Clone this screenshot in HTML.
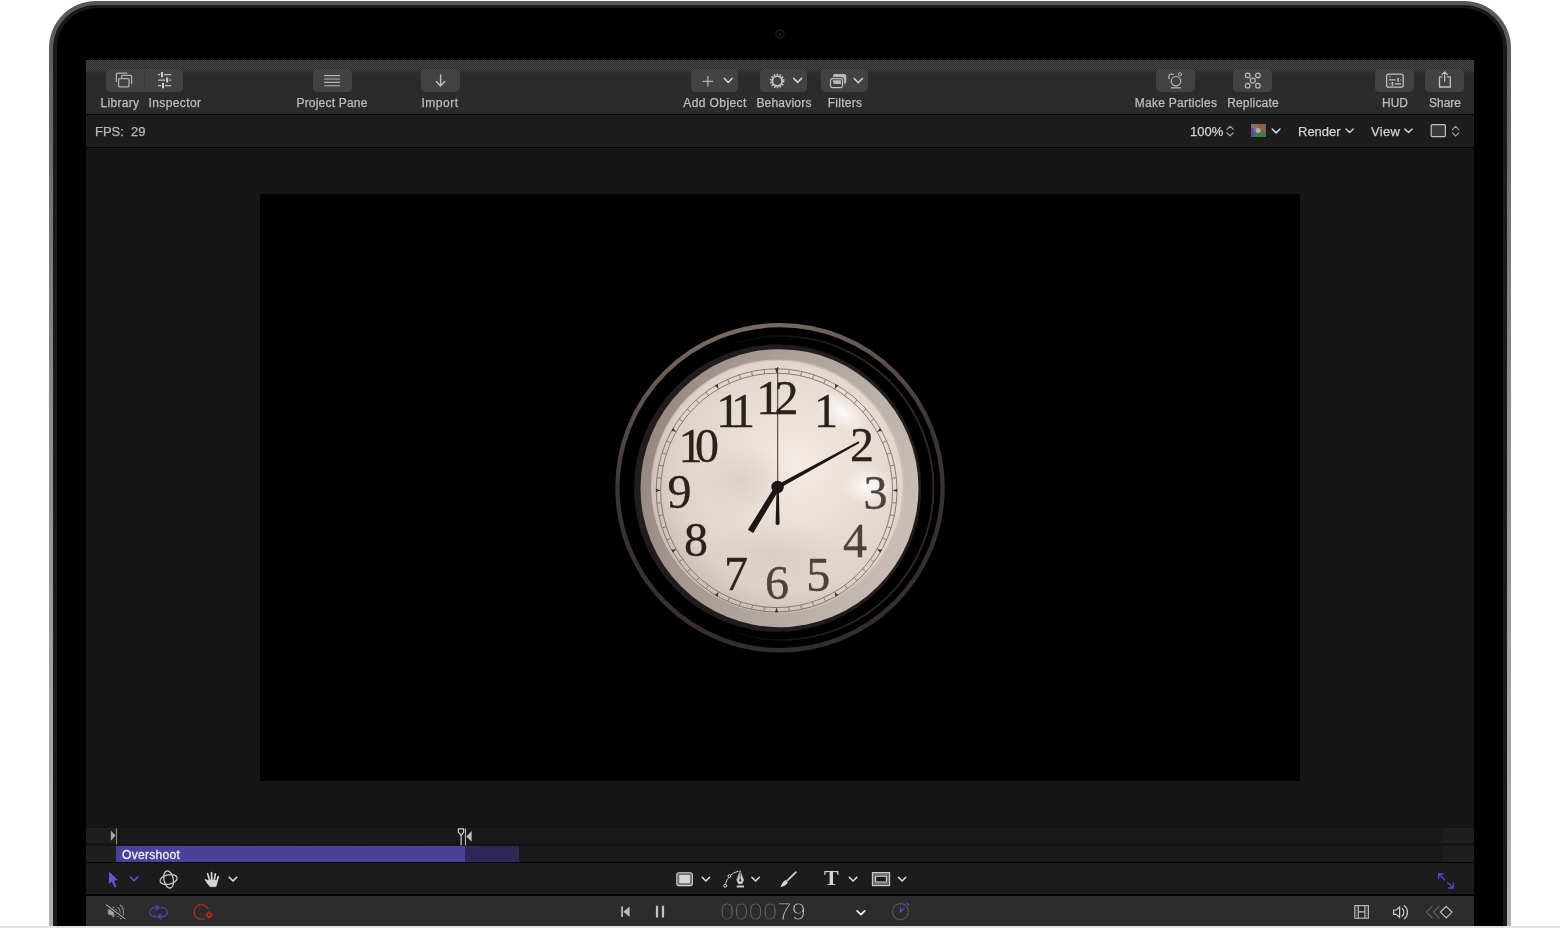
<!DOCTYPE html>
<html lang="en">
<head>
<meta charset="utf-8">
<title>Motion</title>
<style>
*{box-sizing:border-box;margin:0;padding:0}
html,body{width:1560px;height:928px;overflow:hidden;background:#fff}
body{position:relative;font-family:"Liberation Sans",sans-serif;-webkit-font-smoothing:antialiased}
.abs{position:absolute}
#bezelOuter{left:49px;top:1px;width:1462px;height:1000px;border-radius:47px;background:linear-gradient(180deg,#54585b 0px,#5e6265 60px,#8a8e92 400px,#b0b0b0 900px)}
#bezelMid{left:53px;top:5px;width:1454px;height:1000px;border-radius:43px;background:#191919}
#bezelIn{left:57px;top:8px;width:1446px;height:1000px;border-radius:40px;background:#000}
#screen{left:86px;top:60px;width:1388px;height:866px;background:#161616;overflow:hidden}
#bottomStrip{left:0;top:926px;width:1560px;height:2px;background:#e4e1de}
/* coordinates inside #screen are page coords minus (86,60) */
#toolbar{left:0;top:0;width:1388px;height:54px;background:#2b2b2b}
#dither{left:0;top:0;width:1388px;height:10px;background:repeating-conic-gradient(#4a4541 0% 25%,#2d2c2b 0% 50%) 0 0/2px 2px}
#dither2{left:0;top:10px;width:1388px;height:2px;opacity:.6;background:repeating-conic-gradient(#4a4541 0% 25%,#2b2b2b 0% 50%) 0 0/2px 2px}
#dither3{left:0;top:12px;width:1388px;height:2px;opacity:.25;background:repeating-conic-gradient(#4a4541 0% 25%,#2b2b2b 0% 50%) 0 0/2px 2px}
#tline{left:0;top:54px;width:1388px;height:1px;background:#000}
#status{left:0;top:55px;width:1388px;height:32px;background:#1d1d1d}
#sline{left:0;top:87px;width:1388px;height:1px;background:#000}
#canvas{left:174px;top:134px;width:1040px;height:586.5px;background:#000}
#mini1{left:0;top:768px;width:1388px;height:15px;background:#191919}
#mini2{left:0;top:786px;width:1388px;height:16px;background:#191919}
#miniL1{left:0;top:768px;width:30px;height:15px;background:#1f1f1f}
#miniL2{left:0;top:786px;width:30px;height:16px;background:#1f1f1f}
#miniR1{left:1357px;top:768px;width:31px;height:15px;background:#1f1f1f}
#miniR2{left:1357px;top:786px;width:31px;height:16px;background:#1f1f1f}
#ov1{left:30px;top:786px;width:349px;height:16px;background:#4b4198}
#ov2{left:379px;top:786px;width:54px;height:16px;background:#2f2856}
#ovt{-webkit-text-stroke:0.3px #f0eeee;left:36px;top:787.5px;font-size:12px;line-height:14px;color:#f0eeee;letter-spacing:0.3px;white-space:nowrap}
#l3{left:0;top:802px;width:1388px;height:1px;background:#000}
#tools{left:0;top:803px;width:1388px;height:31px;background:#1c1c1c}
#l4{left:0;top:834px;width:1388px;height:2px;background:#000}
#transport{left:0;top:836px;width:1388px;height:30px;background:#2c2c2c}
.btn{position:absolute;top:9px;height:23px;background:#424242;border-radius:4.5px}
.lbl,.st,#ovt,#tc,#ttool{will-change:transform}
.lbl{-webkit-text-stroke:0.25px #c2bebc;position:absolute;top:35.5px;font-size:12px;line-height:14px;color:#c2bebc;white-space:nowrap;text-align:center;transform:translateX(-50%)}
.st{-webkit-text-stroke:0.25px #d6d2d0;position:absolute;top:64px;font-size:13px;line-height:16px;color:#d6d2d0;white-space:pre}
#tc{left:634px;top:837.5px;font-size:24.5px;line-height:28px;letter-spacing:0;transform:scaleX(1.05);transform-origin:0 0;color:#6a6562;white-space:nowrap;-webkit-text-stroke:1.1px #2c2c2c}
#tc b{font-weight:normal;color:#c4bfbc}
#ttool{left:738px;top:806px;font-family:"Liberation Serif",serif;font-weight:bold;font-size:22px;line-height:24px;color:#d6d3d1}
svg#ico{left:0;top:0;width:1560px;height:928px;pointer-events:none}
</style>
</head>
<body>
<div class="abs" id="bezelOuter"></div>
<div class="abs" id="bezelMid"></div>
<div class="abs" id="bezelIn"></div>
<div class="abs" id="screen">
  <div class="abs" id="toolbar"></div>
  <div class="abs" id="dither"></div>
  <div class="abs" id="dither2"></div>
  <div class="abs" id="dither3"></div>
  <div class="btn" style="left:20px;width:77px"></div>
  <div class="btn" style="left:227px;width:39px"></div>
  <div class="btn" style="left:335px;width:39px"></div>
  <div class="btn" style="left:605px;width:47px"></div>
  <div class="btn" style="left:674px;width:47px"></div>
  <div class="btn" style="left:735px;width:47px"></div>
  <div class="btn" style="left:1070px;width:39px"></div>
  <div class="btn" style="left:1147px;width:39px"></div>
  <div class="btn" style="left:1289px;width:39px"></div>
  <div class="btn" style="left:1339px;width:39px"></div>
  <div class="lbl" style="left:33.5px;letter-spacing:0.3px">Library</div>
  <div class="lbl" style="left:89.2px;letter-spacing:0.4px">Inspector</div>
  <div class="lbl" style="left:245.5px;letter-spacing:0.2px">Project Pane</div>
  <div class="lbl" style="left:354.3px;letter-spacing:0.5px">Import</div>
  <div class="lbl" style="left:628.8px;letter-spacing:0.4px">Add Object</div>
  <div class="lbl" style="left:697.5px;letter-spacing:0.2px">Behaviors</div>
  <div class="lbl" style="left:758.5px;letter-spacing:0.25px">Filters</div>
  <div class="lbl" style="left:1089.6px;letter-spacing:0.27px">Make Particles</div>
  <div class="lbl" style="left:1166.5px;letter-spacing:0.18px">Replicate</div>
  <div class="lbl" style="left:1308.5px">HUD</div>
  <div class="lbl" style="left:1358.7px">Share</div>
  <div class="abs" id="tline"></div>
  <div class="abs" id="status"></div>
  <div class="st" style="left:9px;color:#bab6b4;-webkit-text-stroke-color:#bab6b4">FPS:  29</div>
  <div class="st" style="left:1104px">100%</div>
  <div class="st" style="left:1212px">Render</div>
  <div class="st" style="left:1285px;letter-spacing:0.3px">View</div>
  <div class="abs" id="sline"></div>
  <div class="abs" id="canvas"></div>
  <div class="abs" id="mini1"></div><div class="abs" id="mini2"></div>
  <div class="abs" id="miniL1"></div><div class="abs" id="miniL2"></div>
  <div class="abs" id="miniR1"></div><div class="abs" id="miniR2"></div>
  <div class="abs" id="ov1"></div><div class="abs" id="ov2"></div>
  <div class="abs" id="ovt">Overshoot</div>
  <div class="abs" id="l3"></div>
  <div class="abs" id="tools"></div>
  <div class="abs" id="l4"></div>
  <div class="abs" id="transport"></div>
  <div class="abs" id="tc">0000<b>79</b></div>
  <div class="abs" id="ttool">T</div>
</div>
<div class="abs" id="bottomStrip"></div>
<svg class="abs" id="ico" viewBox="0 0 1560 928">
<!--ICONS-A-->
<circle cx="779.9" cy="34" r="3.9" fill="#030303" stroke="#151515" stroke-width="2"/><ellipse cx="779.8" cy="34.6" rx="1" ry="1.5" fill="#2a2a2a" transform="rotate(20 779.8 34.6)"/>
<defs>
<pattern id="chk" width="2" height="2" patternUnits="userSpaceOnUse"><rect width="2" height="2" fill="#2b2b2b"/><rect width="1" height="1" fill="#47423e"/><rect x="1" y="1" width="1" height="1" fill="#47423e"/></pattern>
</defs>
<g fill="none" stroke-linecap="round" stroke-linejoin="round">
<!-- Library -->
<g stroke="#aeb0b1" stroke-width="1.3">
<path d="M116.4,81.5 V74.2 Q116.4,73.2 117.4,73.2 H126.6"/>
<path d="M121.6,77.2 V76.4 Q121.6,75.4 122.6,75.4 H130.6 Q131.6,75.4 131.6,76.4 V83.5"/>
<rect x="118.6" y="78.6" width="10.4" height="8.2" rx="1"/>
</g>
<!-- library/inspector separator -->
<path d="M144.5,71 V90" stroke="#37332f" stroke-width="1" stroke-dasharray="1 1" stroke-linecap="butt"/>
<!-- Inspector sliders -->
<g stroke="#c0c0c0" stroke-width="1.1" stroke-linecap="butt">
<path d="M158,74.6 H160 M164,74.6 H171.2 M158,80.1 H165.2 M169.2,80.1 H171.2 M158,85.6 H161 M165,85.6 H171.2"/>
<path d="M162,72 V77.2 M167.2,77.6 V82.6 M163,83 V88.2" stroke-width="2" stroke="#d0d0d0"/>
</g>
<!-- Project pane -->
<path d="M324.2,75.6 H340 M324.2,79 H340 M324.2,82.4 H340 M324.2,85.8 H340" stroke="#b8b8b8" stroke-width="1.1" stroke-linecap="butt"/>
<!-- Import -->
<path d="M440.6,75 V86 M436.4,81.6 L440.6,86 L444.8,81.6" stroke="#c4c2c1" stroke-width="1.4"/>
<!-- Add object -->
<path d="M702.6,81.3 H713.2 M707.9,76 V86.6" stroke="#b0b2b3" stroke-width="1.3" stroke-linecap="butt"/>
<path d="M724.4,78.4 L728.2,82.4 L732,78.4" stroke="#d4d2d1" stroke-width="1.5"/>
<!-- Behaviors gear -->
<circle cx="777.2" cy="81" r="4.9" stroke="#c6c4c3" stroke-width="1.9"/>
<circle cx="777.2" cy="81" r="6.5" stroke="#c6c4c3" stroke-width="1.6" stroke-dasharray="1.55 1.367" stroke-linecap="butt"/>
<path d="M793.6,78.4 L797.6,82.4 L801.6,78.4" stroke="#d4d2d1" stroke-width="1.5"/>
<!-- Filters -->
<rect x="833" y="73.9" width="13.3" height="10" rx="1.8" fill="#b6b6b6" stroke="none"/>
<rect x="830.5" y="78.7" width="12" height="8.9" rx="1.8" stroke="#424242" stroke-width="3.2"/>
<rect x="830.5" y="78.7" width="12" height="8.9" rx="1.8" stroke="#c6c0bc" stroke-width="1.2"/>
<path d="M854.2,78.5 L858.3,82.7 L862.4,78.5" stroke="#d4d2d1" stroke-width="1.5"/>
<!-- Make particles -->
<g stroke="#b2b4b5" stroke-width="1.2">
<circle cx="1176" cy="81.2" r="4.7"/>
<circle cx="1180" cy="74.3" r="1.6" stroke-width="1"/>
<path d="M1169.2,78.6 A3,3 0 0 1 1173.4,74.5"/>
<path d="M1171,87.8 H1180.8" stroke-linecap="butt" stroke-width="1.3"/>
</g>
<!-- Replicate -->
<g stroke="#b6b8b9" stroke-width="1.2">
<circle cx="1252.8" cy="80.6" r="2.5"/>
<circle cx="1247.7" cy="75.4" r="2.3"/><circle cx="1257.9" cy="75.4" r="2.3"/>
<circle cx="1247.7" cy="85.7" r="2.3"/><circle cx="1257.9" cy="85.7" r="2.3"/>
</g>
<!-- HUD -->
<g stroke="#c2c0bf" stroke-width="1.3">
<rect x="1386.6" y="74.2" width="16.6" height="13" rx="2"/>
<path d="M1389,79.9 H1395.6 M1400.2,79.9 H1401 M1389,83.9 H1390 M1394.8,83.9 H1401" stroke-width="1.1" stroke-linecap="butt"/>
<path d="M1398,78 V81.8 M1392.4,82 V85.8" stroke-width="1.6" stroke-linecap="butt"/>
<path d="M1389.2,76.8 H1390.4" stroke-width="1.1" stroke-linecap="butt"/>
</g>
<!-- Share -->
<g stroke="#c2c0bf" stroke-width="1.3">
<path d="M1442,76.9 H1439.5 V87 H1450.3 V76.9 H1447.4" stroke-linejoin="miter"/>
<path d="M1444.7,72.2 V81.4 M1441.9,74.6 L1444.7,71.8 L1447.5,74.6" stroke-width="1.2"/>
</g>
<!-- status bar: zoom stepper -->
<path d="M1226.9,129.4 L1230.1,126.3 L1233.3,129.4 M1226.9,132.8 L1230.1,135.9 L1233.3,132.8" stroke="#9c9e9e" stroke-width="1.2"/>
<!-- color swatch -->
<g stroke="none">
<rect x="1251" y="124" width="15" height="13" fill="#8f6c6e"/>
<path d="M1257,124 H1266 V132.5 H1259 Z" fill="#8c6248"/>
<path d="M1251,133 L1256,131.5 L1266,131.8 V137 H1251 Z" fill="#42794b"/>
<path d="M1251,128 H1253 L1254.6,131 L1254,134.5 L1252.6,137 H1251 Z" fill="#5548b0" opacity="0.85"/>
<circle cx="1258.2" cy="130.5" r="2.5" fill="#adadad"/>
</g>
<path d="M1272.2,129 L1276.1,132.9 L1280,129" stroke="#dad6d4" stroke-width="1.5"/>
<path d="M1346,129 L1349.6,132.6 L1353.2,129" stroke="#dad6d4" stroke-width="1.4"/>
<path d="M1404.8,129 L1408.5,132.6 L1412.2,129" stroke="#dad6d4" stroke-width="1.4"/>
<!-- view layout box -->
<rect x="1431.2" y="124.6" width="14.2" height="12" rx="1.2" fill="#3a3a3a" stroke="#c4c2c0" stroke-width="1.2"/>
<path d="M1452.4,129.6 L1455.6,126.4 L1458.8,129.6 M1452.4,132.8 L1455.6,136 L1458.8,132.8" stroke="#9c9e9e" stroke-width="1.2"/>
</g>
<!--ICONS-B-->
<g fill="none" stroke-linecap="round" stroke-linejoin="round">
<!-- mini timeline dotted lines -->
<path d="M86,827.5 H1474" stroke="#0a0a0a" stroke-width="1" stroke-dasharray="1 2" stroke-linecap="butt"/>
<path d="M86,844.5 H1474" stroke="#0c0c0c" stroke-width="1" stroke-dasharray="2 5" stroke-linecap="butt"/>
<!-- in marker -->
<path d="M110.8,830.4 L115.6,835.6 L110.8,840.8 Z" fill="#a8a8a8" stroke="none"/>
<path d="M116.5,828.5 V844.5" stroke="#8a8a8a" stroke-width="1.1" stroke-linecap="butt"/>
<!-- playhead -->
<path d="M458.4,828.8 H463.6 V832.2 L461.2,835.4 L458.4,832.2 Z M461.1,835 V845" stroke="#cfcccb" stroke-width="1.2" stroke-linejoin="miter"/>
<!-- out marker -->
<path d="M465.5,828.5 V845.5" stroke="#c0b4b0" stroke-width="1.1" stroke-linecap="butt"/>
<path d="M471.6,831 L466.4,836.4 L471.6,841.8 Z" fill="#bcbcbc" stroke="none"/>
<!-- select arrow -->
<path d="M109,871.6 L117.8,880 L113.9,880.7 L116.7,886.7 L114.7,887.6 L111.9,881.8 L109,883.4 Z" fill="#5a55e2" stroke="none"/>
<path d="M130.4,877 L134.1,880.8 L137.8,877" stroke="#5a55e2" stroke-width="1.6"/>
<!-- 3D orbit -->
<g stroke="#cbc7c5" stroke-width="1.3">
<ellipse cx="168.6" cy="879.5" rx="8.7" ry="4.7" transform="rotate(-12 168.6 879.5)"/>
<ellipse cx="168.6" cy="879.5" rx="8.7" ry="4.7" transform="rotate(78 168.6 879.5)"/>
</g>
<!-- hand -->
<g stroke="#d4d4d4" stroke-width="1.7">
<path d="M205.5,879.8 L209.6,883.6 M207.6,873.7 L210,881 M211.5,872.5 L211.8,880.5 M215.4,873.8 L214,881 M218.4,876.6 L216.3,882.4"/>
<path d="M208.3,880 L216.8,880.6 L217.1,883 L215.8,886.6 H210 L206.8,882.6 Z" fill="#d4d4d4" stroke-width="0.8"/>
</g>
<path d="M229.2,877.2 L233,881 L236.8,877.2" stroke="#e2e0df" stroke-width="1.6"/>
<!-- rect tool -->
<rect x="676.8" y="872.8" width="15.6" height="12.8" rx="2" fill="#6c6e6e" stroke="#d4d2d1" stroke-width="1.1"/>
<rect x="679.2" y="875" width="10.8" height="8.2" fill="#d4d4d4" stroke="none"/>
<path d="M702.2,877.2 L705.9,881 L709.6,877.2" stroke="#e2e0df" stroke-width="1.5"/>
<!-- bezier pen -->
<g stroke="#d2d0cf" stroke-width="1">
<path d="M725.4,884.4 Q727.6,874 738.2,871.2"/>
<circle cx="725.2" cy="885.8" r="1.5" fill="#1c1c1c"/>
<circle cx="729.4" cy="876.2" r="1.4" fill="#1c1c1c"/>
<path d="M740.2,871 L743.6,880 L742,883.8 H738.4 L736.9,880 Z" fill="#d2d0cf" stroke-width="0.6"/>
<path d="M740.2,872.5 V879.5" stroke="#1c1c1c" stroke-width="0.7"/>
<circle cx="740.2" cy="880.4" r="1.1" fill="#1c1c1c" stroke="none"/>
<path d="M736.8,886.5 H744" stroke-width="1.9" stroke-linecap="butt"/>
</g>
<path d="M751.9,877.2 L755.6,881 L759.3,877.2" stroke="#e2e0df" stroke-width="1.5"/>
<!-- brush -->
<path d="M796.4,871.6 L787,880.8" stroke="#d6d4d3" stroke-width="1.7" stroke-linecap="butt"/>
<path d="M785.8,880 L788,882.2 Q786.4,885.6 780.6,887.2 Q782.2,881.6 785.8,880 Z" fill="#d6d4d3" stroke="none"/>
<path d="M849.3,877.2 L853.1,881 L856.9,877.2" stroke="#e2e0df" stroke-width="1.5"/>
<!-- mask tool -->
<rect x="872.4" y="872.6" width="17.2" height="13" fill="#6c6e6e" stroke="#d4d2d1" stroke-width="1.1" stroke-linejoin="miter"/>
<rect x="875.6" y="876.2" width="10.8" height="5.8" rx="0.8" fill="#1c1c1c" stroke="#d4d2d1" stroke-width="1.1"/>
<path d="M898.4,877.2 L902.1,881 L905.8,877.2" stroke="#e2e0df" stroke-width="1.5"/>
<!-- expand arrows -->
<g stroke="#5248dc" stroke-width="1.3">
<path d="M1439,874.4 L1444.6,879.8 M1447.4,882.4 L1452.8,887.6 M1438.6,878.6 V874 H1443.2 M1453.2,883.2 V888 H1448.6"/>
</g>
<!-- mute -->
<g stroke="#9a9a9a" stroke-width="1.2">
<path d="M108.4,909.6 H110.8 L113.8,906.8 V917.2 L110.8,914.4 H108.4 Z" fill="#a6a6a6" stroke-width="0.6"/>
<path d="M115.8,909.6 A3.2,3.2 0 0 1 115.8,914.4 M118,907.4 A6,6 0 0 1 118,916.6 M120.2,905 A9,9 0 0 1 120.2,919" stroke="#8e8e8e" stroke-width="1.1"/>
<path d="M106.2,904.8 L124.8,918.6" stroke="#2c2c2c" stroke-width="2.8"/>
<path d="M106.2,904.8 L124.8,918.6" stroke="#c9c0ba" stroke-width="1"/>
</g>
<!-- loop -->
<g stroke="#4a42b8" stroke-width="1.5">
<path d="M158.6,907.8 H154.4 A4.4,4.4 0 0 0 154.4,916.6 H156.2"/>
<path d="M158.4,916.6 H162.8 A4.4,4.4 0 0 0 162.8,907.8 H161.2"/>
<path d="M156.6,905 L159.6,907.8 L156.6,910.6 Z M160.6,913.8 L157.6,916.6 L160.6,919.4 Z" fill="#4a42b8" stroke-width="0.8"/>
</g>
<!-- record -->
<g stroke="#ae2b22" stroke-width="1.3">
<path d="M207.9,908.4 A7.4,7.4 0 1 0 204.6,918.6"/>
<path d="M209.2,911.6 L212.6,915 L209.2,918.4 L205.8,915 Z" fill="#ae2b22" stroke-width="1"/>
<circle cx="209.2" cy="915" r="1.1" fill="#2c2c2c" stroke="none"/>
</g>
<!-- skip back / pause -->
<path d="M621.2,906.6 H623 V916.9 H621.2 Z M629.6,906.6 V916.9 L623.4,911.75 Z" fill="#b9b9b9" stroke="none"/>
<path d="M655.9,905.8 H658.1 V917.6 H655.9 Z M661.9,905.8 H664.1 V917.6 H661.9 Z" fill="#c6c4c3" stroke="none"/>
<path d="M857.1,910.8 L860.9,914.6 L864.7,910.8" stroke="#f2f0ef" stroke-width="1.7"/>
<!-- timing clock -->
<circle cx="900.4" cy="911.6" r="8.1" stroke="#565350" stroke-width="1.3"/>
<path d="M900,912.4 L900.1,905.8 L901.4,909.4 L904.8,907.4 L900.9,912.6 Z" fill="#5a50e0" stroke="none"/>
<path d="M907.2,903.2 L908.6,904.8" stroke="#5a50e0" stroke-width="1.4"/>
<!-- film -->
<g stroke="#c4c0be" stroke-width="1.1" stroke-linejoin="miter" stroke-linecap="butt">
<rect x="1354.8" y="905.6" width="13.6" height="12.6"/>
<path d="M1358.3,905.6 V918.2 M1364.9,905.6 V918.2 M1358.3,911.9 H1364.9"/>
<path d="M1355.4,908 H1357.8 M1355.4,910.5 H1357.8 M1355.4,913 H1357.8 M1355.4,915.5 H1357.8 M1365.4,908 H1367.8 M1365.4,910.5 H1367.8 M1365.4,913 H1367.8 M1365.4,915.5 H1367.8" stroke-width="0.8" stroke="#8a8684"/>
</g>
<!-- speaker -->
<g stroke="#cfcbc9" stroke-width="1.2">
<path d="M1393.6,910 H1396.2 L1399.6,907 V917.4 L1396.2,914.4 H1393.6 Z" stroke-linejoin="miter"/>
<path d="M1402.2,908.4 A5,5 0 0 1 1402.2,916 M1404.4,905.6 A8.6,8.6 0 0 1 1404.4,918.8"/>
</g>
<!-- keyframe diamonds -->
<path d="M1432.2,906.3 L1426.4,912.1 L1432.2,917.9 M1439.2,906.3 L1433.4,912.1 L1439.2,917.9" stroke="#6a6664" stroke-width="1.1" stroke-linejoin="miter"/>
<path d="M1446.2,906.3 L1452,912.1 L1446.2,917.9 L1440.4,912.1 Z" stroke="#cfc7c1" stroke-width="1.1" stroke-linejoin="miter"/>
</g>
<!--CLOCK-->
<defs>
<radialGradient id="faceG" cx="0.58" cy="0.42" r="0.62">
<stop offset="0" stop-color="#f3ebe5"/><stop offset="0.4" stop-color="#eadfd7"/><stop offset="0.8" stop-color="#e0d2c9"/><stop offset="1" stop-color="#cdbeb4"/>
</radialGradient>
<linearGradient id="ringG" x1="0" y1="0.35" x2="1" y2="0.65">
<stop offset="0" stop-color="#94887f"/><stop offset="0.3" stop-color="#a69a93"/><stop offset="0.65" stop-color="#b7aca5"/><stop offset="1" stop-color="#cbbfb8"/>
</linearGradient>
<linearGradient id="rimG" x1="0.4" y1="0" x2="0.6" y2="1">
<stop offset="0" stop-color="#786c65"/><stop offset="0.2" stop-color="#5a4f49"/><stop offset="0.4" stop-color="#3e3531"/><stop offset="1" stop-color="#352d29"/>
</linearGradient>
<linearGradient id="r2G" x1="0" y1="0" x2="1" y2="0"><stop offset="0.3" stop-color="#2e2622" stop-opacity="0"/><stop offset="0.8" stop-color="#352c27"/></linearGradient>
<radialGradient id="hlG" cx="0.5" cy="0.5" r="0.5"><stop offset="0" stop-color="#ffffff" stop-opacity="0.9"/><stop offset="1" stop-color="#ffffff" stop-opacity="0"/></radialGradient>
<radialGradient id="shG" cx="0.5" cy="0.5" r="0.5"><stop offset="0" stop-color="#d3c4ba" stop-opacity="0.55"/><stop offset="1" stop-color="#d3c4ba" stop-opacity="0"/></radialGradient>
<filter id="soft" x="-5%" y="-5%" width="110%" height="110%"><feGaussianBlur stdDeviation="0.55"/></filter>
</defs>
<g filter="url(#soft)">
<circle cx="780" cy="487.7" r="162.6" fill="#030303" stroke="url(#rimG)" stroke-width="4.4"/>
<circle cx="781.5" cy="488" r="152" fill="none" stroke="url(#r2G)" stroke-width="1.6"/>
<circle cx="777.6" cy="488.2" r="143.6" fill="#241f1d"/>
<circle cx="779.5" cy="488.2" r="139" fill="url(#ringG)"/>
<circle cx="778" cy="486.4" r="127" fill="#c9bfb9"/>
<circle cx="777.6" cy="486" r="125.2" fill="url(#faceG)"/>
<ellipse cx="868" cy="486" rx="26" ry="20" fill="url(#hlG)"/>
<ellipse cx="842" cy="412" rx="30" ry="16" fill="url(#hlG)" transform="rotate(35 842 412)"/>
<ellipse cx="742" cy="480" rx="46" ry="36" fill="url(#shG)"/>
<ellipse cx="775" cy="556" rx="70" ry="34" fill="url(#shG)"/>
<ellipse cx="776.6" cy="490.4" rx="120.4" ry="121.6" fill="none" stroke="#70665f" stroke-width="0.8"/>
<ellipse cx="776.6" cy="490.4" rx="116" ry="117.2" fill="none" stroke="#70665f" stroke-width="0.8"/>
<path d="M776.6,373.2L776.6,368.8M788.7,373.8L789.2,369.5M800.7,375.8L801.6,371.5M812.4,378.9L813.8,374.8M823.8,383.3L825.6,379.3M834.6,388.9L836.8,385.1M844.8,395.6L847.4,392.0M854.2,403.3L857.2,400.0M862.8,412.0L866.1,409.0M870.4,421.5L874.0,418.9M877.1,431.8L880.9,429.6M882.6,442.7L886.6,440.9M886.9,454.2L891.1,452.8M890.1,466.0L894.4,465.1M892.0,478.1L896.3,477.7M892.6,490.4L897.0,490.4M892.0,502.7L896.3,503.1M890.1,514.8L894.4,515.7M886.9,526.6L891.1,528.0M882.6,538.1L886.6,539.9M877.1,549.0L880.9,551.2M870.4,559.3L874.0,561.9M862.8,568.8L866.1,571.8M854.2,577.5L857.2,580.8M844.8,585.2L847.4,588.8M834.6,591.9L836.8,595.7M823.8,597.5L825.6,601.5M812.4,601.9L813.8,606.0M800.7,605.0L801.6,609.3M788.7,607.0L789.2,611.3M776.6,607.6L776.6,612.0M764.5,607.0L764.0,611.3M752.5,605.0L751.6,609.3M740.8,601.9L739.4,606.0M729.4,597.5L727.6,601.5M718.6,591.9L716.4,595.7M708.4,585.2L705.8,588.8M699.0,577.5L696.0,580.8M690.4,568.8L687.1,571.8M682.8,559.3L679.2,561.9M676.1,549.0L672.3,551.2M670.6,538.1L666.6,539.9M666.3,526.6L662.1,528.0M663.1,514.8L658.8,515.7M661.2,502.7L656.9,503.1M660.6,490.4L656.2,490.4M661.2,478.1L656.9,477.7M663.1,466.0L658.8,465.1M666.3,454.2L662.1,452.8M670.6,442.7L666.6,440.9M676.1,431.8L672.3,429.6M682.8,421.5L679.2,418.9M690.4,412.0L687.1,409.0M699.0,403.3L696.0,400.0M708.4,395.6L705.8,392.0M718.6,388.9L716.4,385.1M729.4,383.3L727.6,379.3M740.8,378.9L739.4,374.8M752.5,375.8L751.6,371.5M764.5,373.8L764.0,369.5" stroke="#70665f" stroke-width="0.8" fill="none"/>
<path d="M778.3,368.6L774.9,368.6L776.6,372.8ZM838.4,385.8L835.4,384.1L834.8,388.6ZM881.9,431.0L880.2,428.0L877.4,431.6ZM897.2,492.1L897.2,488.7L893.0,490.4ZM880.2,552.8L881.9,549.8L877.4,549.2ZM835.4,596.7L838.4,595.0L834.8,592.2ZM774.9,612.2L778.3,612.2L776.6,608.0ZM714.8,595.0L717.8,596.7L718.4,592.2ZM671.3,549.8L673.0,552.8L675.8,549.2ZM656.0,488.7L656.0,492.1L660.2,490.4ZM673.0,428.0L671.3,431.0L675.8,431.6ZM717.8,384.1L714.8,385.8L718.4,388.6Z" fill="#3a302b"/>
<g font-family="'Liberation Serif',serif" font-size="48" fill="#2b231f" stroke="#2b231f" stroke-width="0.35" text-anchor="middle">
<text x="768.2" y="414">1</text>
<text x="786.6" y="414">2</text>
<text x="825.9" y="426.5">1</text>
<text x="862.1" y="461.4">2</text>
<text x="875.6" y="509.4" fill="#4e423c" stroke="#4e423c">3</text>
<text x="855.1" y="557" fill="#4e423c" stroke="#4e423c">4</text>
<text x="818.3" y="591" fill="#4e423c" stroke="#4e423c">5</text>
<text x="776.9" y="599" fill="#4e423c" stroke="#4e423c">6</text>
<text x="736" y="589.6">7</text>
<text x="696" y="556">8</text>
<text x="679.4" y="508.4">9</text>
<text x="690.5" y="462.4">1</text>
<text x="707" y="462.4">0</text>
<text x="728.3" y="426.5">1</text>
<text x="742.9" y="426.5">1</text>
</g>
<path d="M775.4,485.6 L779.8,488.4 L753.2,533 L747.9,529.8 Z" fill="#1d1714"/>
<path d="M776.6,488 L778.8,488 L779.6,523.6 Q777.6,527 775.6,523.6 Z" fill="#1d1714"/>
<path d="M776.8,485 L778.6,488.8 L859.4,443 L858.6,441.2 Z" fill="#1a1512"/>
<path d="M777.7,367 V488" stroke="#2a2320" stroke-width="0.9" fill="none"/>
<circle cx="777.6" cy="487" r="6.2" fill="#1a1512"/>
</g>
</svg>
</body>
</html>
